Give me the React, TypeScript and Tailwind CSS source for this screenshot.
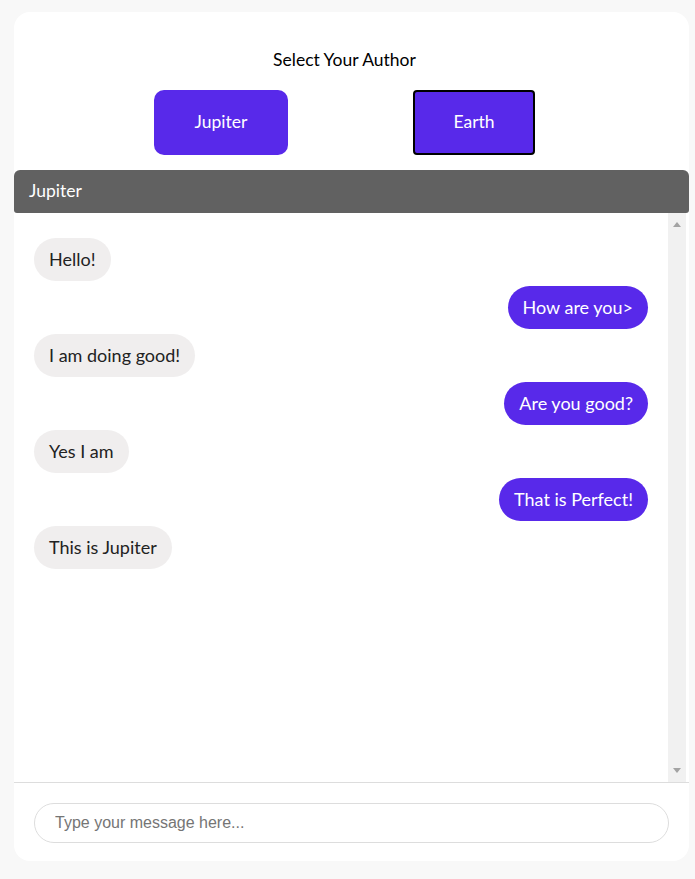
import { useState } from "react";

type Msg = { text: string; mine: boolean };

const messages: Msg[] = [
  { text: "Hello!", mine: false },
  { text: "How are you>", mine: true },
  { text: "I am doing good!", mine: false },
  { text: "Are you good?", mine: true },
  { text: "Yes I am", mine: false },
  { text: "That is Perfect!", mine: true },
  { text: "This is Jupiter", mine: false },
];

const App = () => {
  const [author, setAuthor] = useState("Jupiter");
  const [draft, setDraft] = useState("");

  return (
    <div
      className="min-h-[879px] bg-[#f8f8f8] pt-[12px] pl-[14px] pr-[6px] pb-[18px]"
      style={{ fontFamily: '"Segoe UI", Lato, "Noto Sans", sans-serif' }}
    >
      <div className="bg-white rounded-[16px] overflow-hidden flex flex-col">
        {/* Author picker */}
        <div className="flex flex-col items-center pt-[36px] pb-[15px] pr-[14px]">
          <div className="text-[17.5px] leading-[24px] text-black">Select Your Author</div>
          <div className="flex items-center gap-[125px] mt-[18px]">
            <button
              onClick={() => setAuthor("Jupiter")}
              className="w-[134px] h-[65px] rounded-[10px] bg-[#5829ea] text-white text-[17.5px]"
            >
              Jupiter
            </button>
            <button
              onClick={() => setAuthor("Earth")}
              className="w-[122px] h-[65px] rounded-[4px] bg-[#5829ea] text-white text-[17.5px] border-2 border-black"
            >
              Earth
            </button>
          </div>
        </div>

        {/* Header */}
        <div className="h-[43px] bg-[#616161] rounded-t-[6px] rounded-b-[3px] flex items-center px-[15px] text-white text-[17.5px]">
          {author === "Earth" ? "Jupiter" : "Jupiter"}
        </div>

        {/* Messages */}
        <div className="h-[570px] flex border-b border-[#dddddd]">
          <div className="flex-1 overflow-hidden flex flex-col gap-[5px] pt-[25px] px-[20px]">
            {messages.map((m, i) => (
              <div key={i} className={`flex ${m.mine ? "justify-end" : "justify-start"}`}>
                <div
                  className={`h-[43px] flex items-center px-[15px] rounded-full text-[18px] ${
                    m.mine ? "bg-[#5829ea] text-white" : "bg-[#f0eeee] text-[#222222]"
                  }`}
                >
                  {m.text}
                </div>
              </div>
            ))}
          </div>
          {/* scrollbar */}
          <div className="w-[18px] mr-[3px] bg-[#f1f1f1] flex flex-col items-center justify-between py-[9px]">
            <svg width="8" height="5" viewBox="0 0 8 5">
              <path d="M0 5 L4 0 L8 5 Z" fill="#a3a3a3" />
            </svg>
            <svg width="8" height="5" viewBox="0 0 8 5">
              <path d="M0 0 L8 0 L4 5 Z" fill="#a3a3a3" />
            </svg>
          </div>
        </div>

        {/* Input */}
        <div className="pt-[20px] pb-[18px] px-[20px]">
          <input
            value={draft}
            onChange={(e) => setDraft(e.target.value)}
            placeholder="Type your message here..."
            className="w-full h-[40px] rounded-full border border-[#dddddd] px-[20px] text-[16px] text-[#222] placeholder:text-[#757575] outline-none"
            style={{ fontFamily: '"Liberation Sans", Arial, sans-serif' }}
          />
        </div>
      </div>
    </div>
  );
};

export default App;
